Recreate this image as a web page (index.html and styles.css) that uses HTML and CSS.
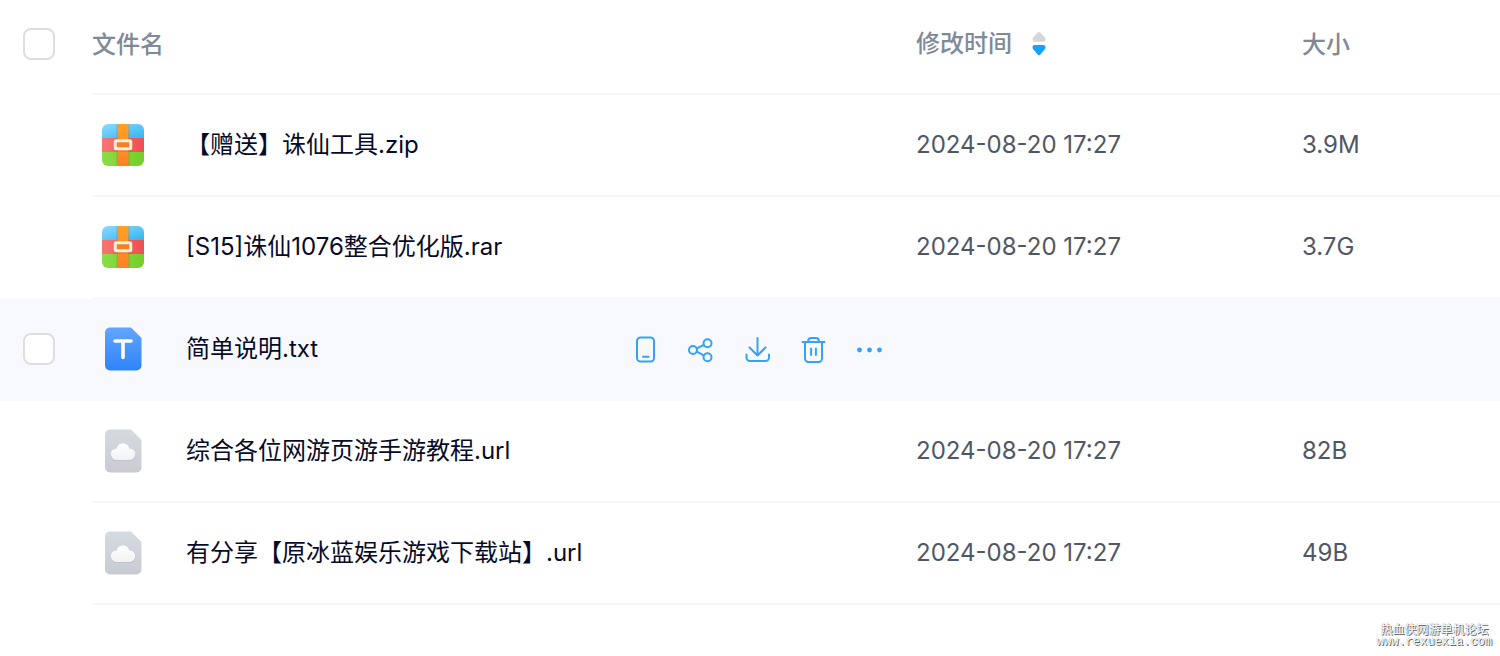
FILE: index.html
```html
<!DOCTYPE html>
<html lang="zh-CN">
<head>
<meta charset="utf-8">
<meta name="viewport" content="width=device-width, initial-scale=1">
<title>文件列表</title>
<link rel="stylesheet" href="styles.css">
</head>
<body>
<svg class="defs" aria-hidden="true">
  <defs>
    <linearGradient id="sky" x1="0" y1="0" x2="1" y2="1"><stop offset="0" stop-color="#8adcff"/><stop offset="1" stop-color="#35b4f0"/></linearGradient>
    <linearGradient id="red" x1="0" y1="0" x2="1" y2="0"><stop offset="0" stop-color="#f87575"/><stop offset="1" stop-color="#ee4f52"/></linearGradient>
    <linearGradient id="green" x1="0" y1="0" x2="1" y2="0"><stop offset="0" stop-color="#8bdc48"/><stop offset="1" stop-color="#73cf27"/></linearGradient>
    <linearGradient id="orange" x1="0" y1="0" x2="0" y2="1"><stop offset="0" stop-color="#ffa126"/><stop offset="1" stop-color="#ff8126"/></linearGradient>
    <linearGradient id="blue" x1="0" y1="0" x2="0" y2="1"><stop offset="0" stop-color="#62a5ff"/><stop offset="1" stop-color="#2f83f8"/></linearGradient>
    <linearGradient id="gray" x1="0" y1="0" x2="0" y2="1"><stop offset="0" stop-color="#d5dae0"/><stop offset="1" stop-color="#c9cbd3"/></linearGradient>
    <linearGradient id="cloud" x1="0" y1="0" x2="0" y2="1"><stop offset="0" stop-color="#fff"/><stop offset="1" stop-color="#f1f2f4"/></linearGradient>
    <clipPath id="box"><rect width="42" height="42" rx="6"/></clipPath>
    <symbol id="archive" viewBox="0 0 42 42">
      <g clip-path="url(#box)">
        <rect width="42" height="14" fill="url(#sky)"/>
        <rect y="14" width="42" height="14" fill="url(#red)"/>
        <rect y="28" width="42" height="14" fill="url(#green)"/>
        <rect x="14.500" width="13" height="42" fill="#000" opacity=".12"/>
        <rect x="15.500" width="11" height="42" fill="url(#orange)"/>
      </g>
      <rect x="13" y="17" width="16" height="9" rx="1" fill="none" stroke="#c55f28" stroke-opacity=".3" stroke-width="4"/>
      <rect x="13.200" y="16.800" width="15.600" height="8" rx="1" fill="#f57f26" stroke="#fff0dc" stroke-width="3"/>
    </symbol>
    <symbol id="text-file" viewBox="0 0 42 44">
      <path d="M7.500 .5H29L39.500 11V38.500a5 5 0 0 1-5 5H8a5 5 0 0 1-5-5V5.500a5 5 0 0 1 5-5Z" fill="url(#blue)"/>
      <path d="M13 14H29M21 14V30.500" fill="none" stroke="#fff" stroke-width="3.600" stroke-linecap="round"/>
    </symbol>
    <symbol id="link-file" viewBox="0 0 42 44">
      <path d="M7.500 .5H29L39.500 11V38.500a5 5 0 0 1-5 5H8a5 5 0 0 1-5-5V5.500a5 5 0 0 1 5-5Z" fill="url(#gray)"/>
      <path d="M14.500 32a5.700 5.700 0 0 1-.3-11.400 7 7 0 0 1 13.600 0 5.700 5.700 0 0 1-.3 11.400Z" fill="#a9adb8" opacity=".35"/>
      <path d="M14.500 31a5.800 5.800 0 0 1 .2-11.600 6.500 6.500 0 0 1 12.600 0 5.800 5.800 0 0 1 .2 11.600Z" fill="url(#cloud)"/>
    </symbol>
  </defs>
</svg>

<table class="files">
  <colgroup><col class="col-check"><col><col class="col-time"><col class="col-size"></colgroup>
  <thead>
    <tr>
      <th class="check"><input type="checkbox" aria-label="全选"></th>
      <th scope="col">文件名</th>
      <th scope="col" class="sorted"><button class="sort" type="button">修改时间
        <svg width="14" height="24" viewBox="0 0 14 24" aria-hidden="true"><path d="M5.600 .8a2 2 0 0 1 2.800 0L13 5.500Q14.300 8.500 12 9.800H2Q-.3 8.500 1 5.500Z" fill="#d5d6dc"/><path d="M2 13H12Q14.300 14 13 17L8.400 22.500a2 2 0 0 1-2.800 0L1 17Q-.3 14 2 13Z" fill="#14a3ff"/></svg></button></th>
      <th scope="col">大小</th>
    </tr>
  </thead>
  <tbody>
    <tr>
      <td class="check"></td>
      <td><div class="entry"><svg class="icon"><use href="#archive"/></svg><span class="name">【赠送】诛仙工具.zip</span></div></td>
      <td>2024-08-20 17:27</td>
      <td>3.9M</td>
    </tr>
    <tr class="before-active">
      <td class="check"></td>
      <td><div class="entry"><svg class="icon"><use href="#archive"/></svg><span class="name">[S15]诛仙1076整合优化版.rar</span></div></td>
      <td>2024-08-20 17:27</td>
      <td>3.7G</td>
    </tr>
    <tr class="active">
      <td class="check"><input type="checkbox" aria-label="选择 简单说明.txt"></td>
      <td><div class="entry"><svg class="icon doc"><use href="#text-file"/></svg><span class="name">简单说明.txt</span>
        <div class="actions">
          <button type="button" aria-label="发送到手机"><svg viewBox="0 0 28 28"><rect x="6" y="2.500" width="17" height="24" rx="3.500"/><path d="M12 21.700h5.500"/></svg></button>
          <button type="button" aria-label="分享"><svg viewBox="0 0 28 28"><circle cx="6" cy="15" r="4"/><circle cx="20.500" cy="8.300" r="4"/><circle cx="20.500" cy="22.200" r="4"/><path d="M9.700 13.400 16.800 10M9.700 16.700l7.100 3.700"/></svg></button>
          <button type="button" aria-label="下载"><svg viewBox="0 0 28 28"><path d="M14.500 3v17.500M6.500 12.500l8 8 8-8M3.500 19.500V22.500a3.500 3.500 0 0 0 3.500 3.500h15.500a3.500 3.500 0 0 0 3.500-3.500V19.500"/></svg></button>
          <button type="button" aria-label="删除"><svg viewBox="0 0 28 28"><path d="M3.500 7H25.500M6 7V23.500a3.500 3.500 0 0 0 3.500 3.500h10a3.500 3.500 0 0 0 3.500-3.500V7M9.200 7V6a3 3 0 0 1 3-3h4.600a3 3 0 0 1 3 3v1M12.100 13.500v6.500M16.900 13.500v6.500"/></svg></button>
          <button type="button" aria-label="更多"><svg viewBox="0 0 28 28"><g class="dots"><circle cx="4.500" cy="15" r="2.400"/><circle cx="14.500" cy="15" r="2.400"/><circle cx="24.500" cy="15" r="2.400"/></g></svg></button>
        </div></div></td>
      <td></td>
      <td></td>
    </tr>
    <tr>
      <td class="check"></td>
      <td><div class="entry"><svg class="icon doc"><use href="#link-file"/></svg><span class="name">综合各位网游页游手游教程.url</span></div></td>
      <td>2024-08-20 17:27</td>
      <td>82B</td>
    </tr>
    <tr>
      <td class="check"></td>
      <td><div class="entry"><svg class="icon doc"><use href="#link-file"/></svg><span class="name">有分享【原冰蓝娱乐游戏下载站】.url</span></div></td>
      <td>2024-08-20 17:27</td>
      <td>49B</td>
    </tr>
  </tbody>
</table>

<div class="watermark"><span>热血侠网游单机论坛</span><span class="site">www.rexuexia.com</span></div>
</body>
</html>
```
FILE: styles.css
```css
* {
  box-sizing: border-box;
}

body {
  position: relative;
  min-height: 100vh;
  margin: 0;
  background: #fff;
  color: #4f5766;
  font: 24px/36px Inter, "Noto Sans CJK SC", sans-serif;
}

.defs {
  position: absolute;
  width: 0;
  height: 0;
}

.files {
  width: 100%;
  table-layout: fixed;
  border-collapse: separate;
  border-spacing: 0;
}

.col-check { width: 92px; }
.col-time { width: 386px; }
.col-size { width: 198px; }

.files th,
.files td {
  height: 102px;
  padding: 0;
  border-bottom: 2px solid #f5f6f7;
  text-align: left;
  vertical-align: middle;
}

.files th {
  height: 95px;
  padding-bottom: 3px;
  color: #818999;
  font-weight: 500;
}

.files .check {
  padding-left: 23px;
  border-bottom-color: transparent;
}

.files th.check,
.files .sorted {
  padding-bottom: 6px;
}

.files .before-active td:not(.check) {
  border-bottom-color: #f7f9fd;
}

.files .active td {
  background: #f7f9fd;
  border-bottom-color: #f7f9fd;
}

.check input {
  display: block;
  width: 32px;
  height: 32px;
  margin: 0;
  border: 2px solid #dddee4;
  border-radius: 8px;
  background: #fff;
  appearance: none;
}

.sort {
  display: flex;
  align-items: center;
  gap: 20px;
  padding: 0;
  border: 0;
  background: none;
  color: inherit;
  font: inherit;
}

.entry {
  display: flex;
  align-items: center;
  padding-left: 10px;
}

.icon {
  flex: none;
  width: 42px;
  height: 42px;
  margin-right: 42px;
}

.icon.doc {
  height: 44px;
}

.name {
  flex: 1;
  color: #060a28;
  white-space: nowrap;
}

.actions {
  display: flex;
  gap: 28px;
  margin-right: 33px;
}

.actions button {
  width: 28px;
  height: 28px;
  padding: 0;
  border: 0;
  background: none;
}

.actions svg {
  display: block;
  width: 28px;
  height: 28px;
  fill: none;
  stroke: #35a3f5;
  stroke-width: 2;
  stroke-linecap: round;
  stroke-linejoin: round;
}

.actions .dots {
  fill: #35a3f5;
  stroke: none;
}

.watermark {
  position: absolute;
  right: 8px;
  bottom: 8px;
  display: flex;
  flex-direction: column;
  align-items: center;
  color: #fff;
  font-size: 12px;
  line-height: 12px;
  text-shadow: 1px 1px 0 #666, 0 0 1px #777;
}

.site {
  font-family: "Liberation Mono", monospace;
}
```
